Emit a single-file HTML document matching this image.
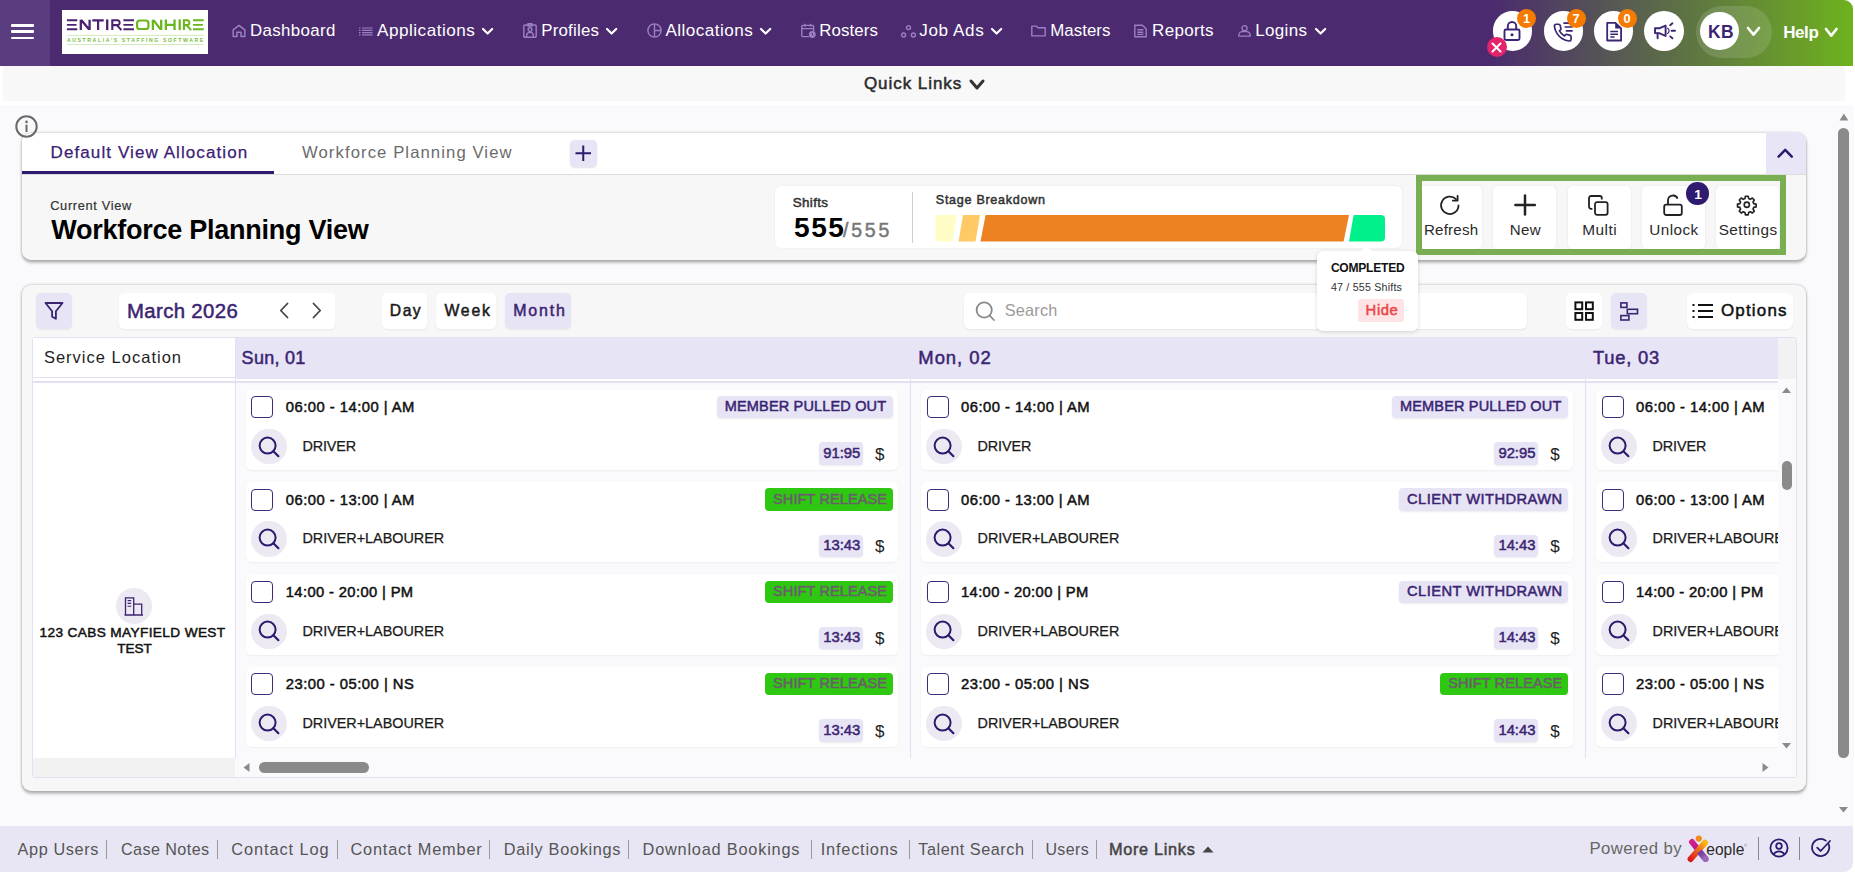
<!DOCTYPE html>
<html><head><meta charset="utf-8"><title>Allocations</title>
<style>
html,body{margin:0;padding:0}
body{width:1855px;height:872px;overflow:hidden;position:relative;background:#f9f9fb;font-family:"Liberation Sans",sans-serif}
.t{position:absolute;white-space:nowrap;line-height:1}
.r{position:absolute;box-sizing:border-box}
svg{position:absolute;overflow:visible}
.s text{font-family:"Liberation Sans",sans-serif}
</style></head><body>
<div class="r" style="left:0.00px;top:0.00px;width:1855.00px;height:872.00px;background:#fff"></div>
<div class="r" style="left:0.00px;top:105.30px;width:1853.80px;height:721.00px;background:#fafafc"></div>
<div class="r" style="left:0.00px;top:0.00px;width:1853.00px;height:66.00px;background:linear-gradient(90deg,#4b2a6f 0px,#4b2a6f 1490px,#6eb21e 1853px);border-top-right-radius:9px"></div>
<div class="r" style="left:0.00px;top:0.00px;width:50.00px;height:66.00px;background:#5a3d7f"></div>
<div class="r" style="left:10.50px;top:24.30px;width:23.50px;height:2.60px;background:#fff;border-radius:1px"></div>
<div class="r" style="left:10.50px;top:30.30px;width:23.50px;height:2.60px;background:#fff;border-radius:1px"></div>
<div class="r" style="left:10.50px;top:36.90px;width:23.50px;height:2.60px;background:#fff;border-radius:1px"></div>
<div class="r" style="left:62.00px;top:10.00px;width:146.00px;height:44.00px;background:#fff"></div>
<svg style="left:62px;top:10px" width="146" height="44" viewBox="0 0 146 44"><defs><clipPath id="lc"><rect x="0" y="9.4" width="146" height="10.7"/></clipPath></defs>
<g fill="none" stroke="#4a2270"><path d="M4.9 10.3H15.3M4.9 14.9H14.5M4.9 19.2H15.3" stroke-width="1.9"/><path d="M18.80 9.4V20.1M27.60 9.4V20.1M18.80 9.4L27.60 20.1" stroke-width="2.3" clip-path="url(#lc)"/><path d="M30.3 10.3H41.7M36.1 9.4V20.1" stroke-width="2.2"/><path d="M45.2 9.4V20.1" stroke-width="2.3"/><path d="M50.3 20.1V10.3H55.9A2.5 2.5 0 0 1 55.9 15.1H50.3M54.9 15.1L59.4 20.1" stroke-width="2.1"/><path d="M61.4 10.3H72.0M61.4 14.9H71.2M61.4 19.2H72.0" stroke-width="1.9"/></g>
<g fill="none" stroke="#6bb51e"><rect x="75.1" y="10.5" width="11.3" height="8.5" rx="2.6" stroke-width="2.2"/><path d="M90.90 9.4V20.1M99.20 9.4V20.1M90.90 9.4L99.20 20.1" stroke-width="2.3" clip-path="url(#lc)"/><path d="M103.85 9.4V20.1M112.55 9.4V20.1M103.8 14.8H112.6" stroke-width="2.3"/><path d="M117.7 9.4V20.1" stroke-width="2.3"/><path d="M121.9 20.1V10.3H125.6A2.5 2.5 0 0 1 125.6 15.1H121.9M124.6 15.1L129.1 20.1" stroke-width="2.1"/><path d="M131.0 10.3H141.7M131.0 14.9H140.9M131.0 19.2H141.7" stroke-width="1.9"/></g>
<rect x="4.9" y="24.9" width="136.8" height="0.9" fill="#cfe8b5"/>
<rect x="4.9" y="34.1" width="136.8" height="0.9" fill="#cfe8b5"/>
<text x="4.9" y="31.9" font-family="Liberation Sans" font-weight="bold" font-size="5.2" fill="#78bd38" textLength="136.4" lengthAdjust="spacing">AUSTRALIA'S   STAFFING   SOFTWARE</text>
</svg>
<svg class="s" style="left:250px;top:16px;" width="119.1" height="27.0"><text x="0.00" y="20.00" font-size="16.86" font-weight="normal" fill="#fff" textLength="85.38" lengthAdjust="spacing">Dashboard</text></svg>
<svg class="s" style="left:377px;top:16px;" width="132.0" height="27.4"><text x="0.00" y="20.00" font-size="17.12" font-weight="normal" fill="#fff" textLength="97.80" lengthAdjust="spacing">Applications</text></svg>
<svg class="s" style="left:541px;top:16px;" width="91.5" height="27.0"><text x="0.20" y="20.00" font-size="16.86" font-weight="normal" fill="#fff" textLength="57.78" lengthAdjust="spacing">Profiles</text></svg>
<svg class="s" style="left:665px;top:16px;" width="121.5" height="27.4"><text x="0.40" y="20.00" font-size="17.10" font-weight="normal" fill="#fff" textLength="87.30" lengthAdjust="spacing">Allocations</text></svg>
<svg class="s" style="left:819px;top:16px;" width="92.3" height="27.0"><text x="0.30" y="20.00" font-size="16.86" font-weight="normal" fill="#fff" textLength="58.58" lengthAdjust="spacing">Rosters</text></svg>
<svg class="s" style="left:919px;top:16px;" width="98.8" height="27.4"><text x="0.20" y="20.00" font-size="17.12" font-weight="normal" fill="#fff" textLength="64.60" lengthAdjust="spacing">Job Ads</text></svg>
<svg class="s" style="left:1050px;top:16px;" width="94.0" height="27.0"><text x="0.20" y="20.00" font-size="16.86" font-weight="normal" fill="#fff" textLength="60.28" lengthAdjust="spacing">Masters</text></svg>
<svg class="s" style="left:1152px;top:16px;" width="95.5" height="27.2"><text x="0.10" y="20.00" font-size="17.00" font-weight="normal" fill="#fff" textLength="61.49" lengthAdjust="spacing">Reports</text></svg>
<svg class="s" style="left:1255px;top:16px;" width="85.8" height="27.2"><text x="0.20" y="20.00" font-size="17.01" font-weight="normal" fill="#fff" textLength="51.79" lengthAdjust="spacing">Logins</text></svg>
<svg style="left:482.0px;top:27.5px" width="11.2" height="6.5"><path d="M1 1L5.60 5.50L10.20 1" fill="none" stroke="#fff" stroke-width="2.2" stroke-linecap="round" stroke-linejoin="round"/></svg>
<svg style="left:606.4px;top:27.5px" width="11.2" height="6.5"><path d="M1 1L5.60 5.50L10.20 1" fill="none" stroke="#fff" stroke-width="2.2" stroke-linecap="round" stroke-linejoin="round"/></svg>
<svg style="left:760.0px;top:27.5px" width="11.2" height="6.5"><path d="M1 1L5.60 5.50L10.20 1" fill="none" stroke="#fff" stroke-width="2.2" stroke-linecap="round" stroke-linejoin="round"/></svg>
<svg style="left:991.2px;top:27.5px" width="11.2" height="6.5"><path d="M1 1L5.60 5.50L10.20 1" fill="none" stroke="#fff" stroke-width="2.2" stroke-linecap="round" stroke-linejoin="round"/></svg>
<svg style="left:1314.8px;top:27.5px" width="11.2" height="6.5"><path d="M1 1L5.60 5.50L10.20 1" fill="none" stroke="#fff" stroke-width="2.2" stroke-linecap="round" stroke-linejoin="round"/></svg>
<svg style="left:232px;top:24px" width="14" height="14" viewBox="0 0 14 14"><path d="M1.2 12.5V5.8L7 1.3l5.8 4.5v6.7H9V8.2H5v4.3z" fill="none" stroke="#9b80c2" stroke-width="1.5" stroke-linejoin="round"/></svg>
<svg style="left:359px;top:26.5px" width="14" height="9" viewBox="0 0 14 9"><g stroke="#9b80c2" stroke-width="1.2"><path d="M0 1h1.5M0 3.3h1.5M0 5.6h1.5M0 7.9h1.5M3 1h10.5M3 3.3h10.5M3 5.6h10.5M3 7.9h10.5"/></g></svg>
<svg style="left:523px;top:23px" width="14" height="15" viewBox="0 0 14 15"><g fill="none" stroke="#9b80c2" stroke-width="1.4"><rect x="0.8" y="2" width="12.4" height="12.2" rx="1"/><circle cx="7" cy="6.6" r="1.9"/><path d="M3.6 14v-1.2a3.4 3.4 0 0 1 6.8 0V14"/><path d="M5 0.8h4v2.2H5z"/></g></svg>
<svg style="left:647px;top:23px" width="15" height="15" viewBox="0 0 15 15"><g fill="none" stroke="#9b80c2" stroke-width="1.4"><circle cx="7.5" cy="7.5" r="6.6"/><path d="M7.5 0.9v13.2M7.5 7.5h6.6"/></g></svg>
<svg style="left:801px;top:23px" width="15" height="15" viewBox="0 0 15 15"><g fill="none" stroke="#9b80c2" stroke-width="1.4"><path d="M8 13.6H1.6a0.8 0.8 0 0 1-0.8-0.8V3.2a0.8 0.8 0 0 1 0.8-0.8h10.2a0.8 0.8 0 0 1 0.8 0.8V8"/><path d="M0.8 5.6h11.8M4 0.8v3M9.5 0.8v3"/></g><circle cx="11.3" cy="11.5" r="3.4" fill="#9b80c2"/><path d="M11.3 9.8v1.8l1.1 0.8" stroke="#4b2a6f" stroke-width="0.9" fill="none"/></svg>
<svg style="left:901px;top:24.5px" width="15" height="13" viewBox="0 0 15 13"><g fill="none" stroke="#9b80c2" stroke-width="1.4"><circle cx="7.5" cy="2.6" r="2"/><circle cx="2.6" cy="10" r="2"/><circle cx="12.4" cy="10" r="2"/></g></svg>
<svg style="left:1031px;top:25px" width="15" height="12" viewBox="0 0 15 12"><path d="M0.8 10.9V1.1h4.6l1.4 1.6h7.4v8.2z" fill="none" stroke="#9b80c2" stroke-width="1.4" stroke-linejoin="round"/></svg>
<svg style="left:1134px;top:24px" width="13" height="14" viewBox="0 0 13 14"><g fill="none" stroke="#9b80c2" stroke-width="1.4"><path d="M0.8 12.8V1.2h7.6l3.8 3.8v7.8z"/><path d="M3.4 5.8h6M3.4 8.2h6M3.4 10.4h6"/></g></svg>
<svg style="left:1238px;top:25px" width="13" height="12" viewBox="0 0 13 12"><g fill="none" stroke="#9b80c2" stroke-width="1.3"><circle cx="6.5" cy="3.2" r="2.5"/><path d="M0.8 11.2v-1a3.5 3.5 0 0 1 3.5-3.5h4.4a3.5 3.5 0 0 1 3.5 3.5v1z"/></g></svg>
<div class="r" style="left:1492.75px;top:11.30px;width:39.50px;height:39.50px;background:#fff;border-radius:50%"></div>
<div class="r" style="left:1543.75px;top:11.30px;width:39.50px;height:39.50px;background:#fff;border-radius:50%"></div>
<div class="r" style="left:1593.95px;top:11.30px;width:39.50px;height:39.50px;background:#fff;border-radius:50%"></div>
<div class="r" style="left:1644.25px;top:11.30px;width:39.50px;height:39.50px;background:#fff;border-radius:50%"></div>
<svg style="left:1502px;top:20px" width="20" height="22" viewBox="0 0 20 22"><g fill="none" stroke="#3b2472" stroke-width="1.9"><rect x="2.5" y="9.5" width="15" height="10.5" rx="1.5"/><path d="M5.8 9.5V6.2a4.2 4.2 0 0 1 8.4 0v3.3"/></g><circle cx="10" cy="14.7" r="1.5" fill="#3b2472"/></svg>
<svg style="left:0;top:0" width="1" height="1"><g transform="translate(1552.6 22.6) scale(0.84)" fill="none" stroke="#3b2472" stroke-width="2" stroke-linejoin="round"><path d="M22 16.92v3a2 2 0 0 1-2.18 2 19.79 19.79 0 0 1-8.63-3.070 19.5 19.5 0 0 1-6-6 19.79 19.79 0 0 1-3.07-8.67A2 2 0 0 1 4.11 2h3a2 2 0 0 1 2 1.72 12.84 12.84 0 0 0 .7 2.81 2 2 0 0 1-.45 2.11L8.09 9.91a16 16 0 0 0 6 6l1.27-1.27a2 2 0 0 1 2.110-.45 12.84 12.84 0 0 0 2.81.7A2 2 0 0 1 22 16.92z"/></g><g stroke="#3b2472" stroke-width="1.7"><path d="M1563.4 23.2h9.3M1564.6 27h8.1M1565.8 30.8h6.9"/></g></svg>
<svg style="left:0;top:0" width="1" height="1"><path d="M1607.2 22.8H1615.4L1621.1 28.4V40.5H1607.2Z" fill="none" stroke="#3b2472" stroke-width="1.8" stroke-linejoin="round"/><path d="M1615.2 22.8L1621.1 28.6H1615.2Z" fill="#3b2472"/><g stroke="#3b2472" stroke-width="1.5"><path d="M1610.3 31.4H1618M1610.3 34.3H1618M1610.3 37.1H1614.6"/></g></svg>
<svg style="left:0;top:0" width="1" height="1"><path d="M1655 28.3H1659.2L1665.6 25.6V36L1659.2 33.1H1655Z" fill="none" stroke="#3b2472" stroke-width="1.9" stroke-linejoin="round"/><g stroke="#3b2472" stroke-width="1.9" stroke-linecap="round" fill="none"><path d="M1657.6 33.5V38.2M1670.2 25.2L1672.4 23.3M1671.6 30.8H1675M1670.2 36.4L1672.4 38.3"/><path d="M1667.6 28.2A3 3 0 0 1 1667.6 33.4" stroke-width="1.2"/></g></svg>
<div class="r" style="left:1516.80px;top:8.50px;width:19.40px;height:19.40px;background:#f57b00;border-radius:50%"></div>
<svg class="s" style="left:1522px;top:7px;" width="38.4" height="20.5"><text x="0.90" y="15.60" font-size="12.79" font-weight="bold" fill="#fff">1</text></svg>
<div class="r" style="left:1566.50px;top:8.50px;width:19.40px;height:19.40px;background:#f57b00;border-radius:50%"></div>
<svg class="s" style="left:1572px;top:7px;" width="38.4" height="20.5"><text x="0.60" y="15.60" font-size="12.79" font-weight="bold" fill="#fff">7</text></svg>
<div class="r" style="left:1617.50px;top:8.50px;width:19.40px;height:19.40px;background:#f57b00;border-radius:50%"></div>
<svg class="s" style="left:1623px;top:7px;" width="38.4" height="20.5"><text x="0.60" y="15.60" font-size="12.79" font-weight="bold" fill="#fff">0</text></svg>
<div class="r" style="left:1486.90px;top:37.20px;width:19.80px;height:19.80px;background:#e2246a;border-radius:50%"></div>
<svg style="left:1491.3px;top:41.6px" width="11" height="11"><path d="M1.5 1.5l8 8M9.5 1.5l-8 8" stroke="#fff" stroke-width="2" stroke-linecap="round"/></svg>
<div class="r" style="left:1696.00px;top:6.00px;width:76.00px;height:51.60px;background:rgba(255,255,255,0.13);border-radius:26px"></div>
<div class="r" style="left:1700.00px;top:11.60px;width:38.80px;height:38.80px;background:#fff;border-radius:50%"></div>
<svg class="s" style="left:1708px;top:17px;" width="60.4" height="27.9"><text x="0.00" y="21.00" font-size="17.44" font-weight="bold" fill="#3b2472" textLength="25.52" lengthAdjust="spacing">KB</text></svg>
<svg style="left:1746.7px;top:27.0px" width="13.0" height="8.6"><path d="M1 1L6.50 7.60L12.00 1" fill="none" stroke="#fff" stroke-width="2.6" stroke-linecap="round" stroke-linejoin="round"/></svg>
<svg class="s" style="left:1783px;top:18px;" width="69.6" height="27.2"><text x="0.20" y="20.00" font-size="17.01" font-weight="bold" fill="#fff" textLength="35.59" lengthAdjust="spacing">Help</text></svg>
<svg style="left:1824.6px;top:27.8px" width="12.5" height="8.6"><path d="M1 1L6.25 7.60L11.50 1" fill="none" stroke="#fff" stroke-width="2.6" stroke-linecap="round" stroke-linejoin="round"/></svg>
<div class="r" style="left:3.00px;top:66.00px;width:1842.00px;height:34.70px;background:#f8f8f8"></div>
<svg class="s" style="left:863px;top:69px;" width="131.5" height="27.2"><text x="0.90" y="19.60" font-size="17.03" font-weight="normal" fill="#2b2b2b" stroke="#2b2b2b" stroke-width="0.50" textLength="97.39" lengthAdjust="spacing">Quick Links</text></svg>
<svg style="left:970.3px;top:80.3px" width="14.0" height="9.0"><path d="M1 1L7.00 8.00L13.00 1" fill="none" stroke="#333" stroke-width="3.0" stroke-linecap="round" stroke-linejoin="round"/></svg>
<div class="r" style="left:22.40px;top:132.60px;width:1783.40px;height:127.60px;background:#f7f7f7;border-radius:9px;box-shadow:0 2.5px 3px rgba(0,0,0,0.24),0 0 3px rgba(0,0,0,0.26)"></div>
<div class="r" style="left:22.40px;top:132.60px;width:1783.40px;height:42.40px;background:#fff;border-radius:9px 9px 0 0;border-bottom:1px solid #dcdcdc"></div>
<div class="r" style="left:22.00px;top:171.00px;width:252.00px;height:3.00px;background:#2e1a6e"></div>
<svg class="s" style="left:50px;top:138px;" width="230.6" height="27.2"><text x="0.60" y="20.20" font-size="17.02" font-weight="normal" fill="#3a2175" stroke="#3a2175" stroke-width="0.25" textLength="196.59" lengthAdjust="spacing">Default View Allocation</text></svg>
<svg class="s" style="left:302px;top:138px;" width="242.9" height="26.7"><text x="0.00" y="20.00" font-size="16.68" font-weight="normal" fill="#6b6b6b" textLength="209.57" lengthAdjust="spacing">Workforce Planning View</text></svg>
<div class="r" style="left:570.00px;top:140.00px;width:27.00px;height:26.60px;background:#e6e4f5;border-radius:5px;box-shadow:0 1px 2px rgba(0,0,0,0.12)"></div>
<svg style="left:574.5px;top:145px" width="16.5" height="16.5"><path d="M8.25 0.5v15.5M0.5 8.25h15.5" stroke="#2e1a6e" stroke-width="2"/></svg>
<div class="r" style="left:1766.00px;top:132.00px;width:40.00px;height:42.00px;background:#e8e6f6;border-top-right-radius:9px"></div>
<svg style="left:1777px;top:148px" width="17" height="10"><path d="M1.6 8.6L8.2 1.8l6.6 6.8" fill="none" stroke="#2e1a6e" stroke-width="2.5" stroke-linecap="round" stroke-linejoin="round"/></svg>
<svg style="left:1777.3px;top:148.7px" width="0" height="0"></svg>
<svg class="s" style="left:50px;top:195px;" width="106.7" height="20.5"><text x="0.20" y="15.30" font-size="12.82" font-weight="normal" fill="#333" stroke="#333" stroke-width="0.20" textLength="81.10" lengthAdjust="spacing">Current View</text></svg>
<svg class="s" style="left:51px;top:207px;" width="371.5" height="43.3"><text x="0.30" y="31.60" font-size="27.03" font-weight="bold" fill="#000" textLength="317.39" lengthAdjust="spacing">Workforce Planning View</text></svg>
<svg style="left:15px;top:114.5px" width="23" height="23" viewBox="0 0 23 23"><circle cx="11.5" cy="11.5" r="10.2" fill="none" stroke="#6a6a6a" stroke-width="2"/><circle cx="11.5" cy="6.9" r="1.3" fill="#6a6a6a"/><rect x="10.5" y="9.6" width="2" height="7.4" fill="#6a6a6a"/></svg>
<div class="r" style="left:775.00px;top:186.00px;width:627.00px;height:62.00px;background:#fff;border-radius:6px;box-shadow:0 0 2px rgba(0,0,0,0.08)"></div>
<svg class="s" style="left:792px;top:191px;" width="61.9" height="21.4"><text x="0.80" y="16.20" font-size="13.40" font-weight="normal" fill="#333" stroke="#333" stroke-width="0.50" textLength="35.14" lengthAdjust="spacing">Shifts</text></svg>
<svg class="s" style="left:794px;top:204px;" width="106.2" height="45.0"><text x="0.00" y="33.30" font-size="28.10" font-weight="bold" fill="#000" textLength="49.97" lengthAdjust="spacing">555</text></svg>
<svg class="s" style="left:843px;top:214px;" width="85.4" height="31.2"><text x="0.00" y="23.30" font-size="19.50" font-weight="normal" fill="#777" stroke="#777" stroke-width="0.50" textLength="46.37" lengthAdjust="spacing">/555</text></svg>
<div class="r" style="left:912.00px;top:192.00px;width:1.00px;height:51.00px;background:#cfcfcf"></div>
<svg class="s" style="left:935px;top:189px;" width="134.1" height="20.1"><text x="0.80" y="15.00" font-size="12.53" font-weight="normal" fill="#333" stroke="#333" stroke-width="0.50" textLength="109.08" lengthAdjust="spacing">Stage Breakdown</text></svg>
<svg style="left:0;top:0" width="1855" height="300">
<path d="M937.5 215H956.8L952.4 241.4H937.5A2 2 0 0 1 935.5 239.4V217A2 2 0 0 1 937.5 215z" fill="#fffcc6"/>
<path d="M963 215H980L975.5 241.4H958.5z" fill="#ffca66"/>
<path d="M985.6 215H1349L1343.6 241.4H980.5z" fill="#ec8221"/>
<path d="M1353.6 215H1381A4 4 0 0 1 1385 219V237.4A4 4 0 0 1 1381 241.4H1349z" fill="#00f08c"/>
</svg>
<div class="r" style="left:1416.00px;top:175.00px;width:370.00px;height:80.00px;border:6px solid #7aae52"></div>
<div class="r" style="left:1419.00px;top:186.00px;width:63.20px;height:62.60px;background:#fff;border-radius:5px;box-shadow:0 0 3px rgba(0,0,0,0.07)"></div>
<svg class="s" style="left:1424px;top:217px;" width="84.3" height="24.2"><text x="0.00" y="18.10" font-size="15.12" font-weight="normal" fill="#2a2a2a" textLength="54.06" lengthAdjust="spacing">Refresh</text></svg>
<div class="r" style="left:1493.00px;top:186.00px;width:63.20px;height:62.60px;background:#fff;border-radius:5px;box-shadow:0 0 3px rgba(0,0,0,0.07)"></div>
<svg class="s" style="left:1509px;top:217px;" width="61.0" height="24.2"><text x="0.80" y="18.10" font-size="15.12" font-weight="normal" fill="#2a2a2a" textLength="30.76" lengthAdjust="spacing">New</text></svg>
<div class="r" style="left:1568.00px;top:186.00px;width:63.20px;height:62.60px;background:#fff;border-radius:5px;box-shadow:0 0 3px rgba(0,0,0,0.07)"></div>
<svg class="s" style="left:1582px;top:217px;" width="65.3" height="24.6"><text x="0.20" y="18.10" font-size="15.38" font-weight="normal" fill="#2a2a2a" textLength="34.58" lengthAdjust="spacing">Multi</text></svg>
<div class="r" style="left:1642.00px;top:186.00px;width:63.20px;height:62.60px;background:#fff;border-radius:5px;box-shadow:0 0 3px rgba(0,0,0,0.07)"></div>
<svg class="s" style="left:1649px;top:217px;" width="79.3" height="24.5"><text x="0.30" y="18.10" font-size="15.29" font-weight="normal" fill="#2a2a2a" textLength="48.77" lengthAdjust="spacing">Unlock</text></svg>
<div class="r" style="left:1716.00px;top:186.00px;width:63.20px;height:62.60px;background:#fff;border-radius:5px;box-shadow:0 0 3px rgba(0,0,0,0.07)"></div>
<svg class="s" style="left:1718px;top:217px;" width="89.0" height="24.5"><text x="0.70" y="18.10" font-size="15.33" font-weight="normal" fill="#2a2a2a" textLength="58.37" lengthAdjust="spacing">Settings</text></svg>
<div class="r" style="left:1422.00px;top:175.00px;width:364.00px;height:6.00px;background:#7aae52"></div>
<div class="r" style="left:1416.00px;top:175.00px;width:6.00px;height:80.00px;background:#7aae52"></div>
<svg style="left:1439px;top:195px" width="23" height="21" viewBox="0 0 23 21"><g fill="none" stroke="#222" stroke-width="1.8" stroke-linecap="round" stroke-linejoin="round"><path d="M19.5 10.5A8.7 8.7 0 1 1 17 4.2"/><path d="M18.6 0.8v4.8h-4.8"/></g></svg>
<svg style="left:1514px;top:194px" width="22" height="22"><path d="M11 1.6v19M1.4 11h19.4" stroke="#222" stroke-width="2.5" stroke-linecap="round"/></svg>
<svg style="left:1588px;top:194.5px" width="22" height="21" viewBox="0 0 22 21"><g fill="none" stroke="#222" stroke-width="1.8" stroke-linejoin="round"><rect x="7" y="7.2" width="12.6" height="12.6" rx="2"/><path d="M4.4 13.8H3A2 2 0 0 1 1 11.8V3A2 2 0 0 1 3 1h8.8a2 2 0 0 1 2 2v1.4"/></g></svg>
<svg style="left:1663px;top:194.5px" width="20" height="21" viewBox="0 0 20 21"><g fill="none" stroke="#222" stroke-width="1.8" stroke-linejoin="round"><rect x="1.2" y="9.6" width="17.6" height="10.4" rx="2"/><path d="M5 9.6V5.6a5 5 0 0 1 9.6-2"/></g></svg>
<svg style="left:1737.2px;top:195.2px" width="19.6" height="19.6" viewBox="0 0 24 24"><g fill="none" stroke="#222" stroke-width="2" stroke-linejoin="round"><circle cx="12" cy="12" r="3.2"/><path d="M10.3 1.5h3.4l0.6 2.9 2 0.9 2.5-1.6 2.4 2.4-1.6 2.5 0.9 2 2.9 0.6v3.4l-2.9 0.6-0.9 2 1.6 2.5-2.4 2.4-2.5-1.6-2 0.9-0.6 2.9h-3.4l-0.6-2.9-2-0.9-2.5 1.6-2.4-2.4 1.6-2.5-0.9-2-2.9-0.6v-3.4l2.9-0.6 0.9-2-1.6-2.5 2.4-2.4 2.5 1.6 2-0.9z"/></g></svg>
<div class="r" style="left:1686.40px;top:182.40px;width:22.60px;height:22.60px;background:#2e1a6e;border-radius:50%"></div>
<svg class="s" style="left:1694px;top:182px;" width="41.0" height="21.9"><text x="0.20" y="16.60" font-size="13.66" font-weight="bold" fill="#fff">1</text></svg>
<div class="r" style="left:22.40px;top:284.80px;width:1783.40px;height:506.00px;background:#f7f7f7;border-radius:9px;box-shadow:0 2.5px 3px rgba(0,0,0,0.24),0 0 3px rgba(0,0,0,0.26)"></div>
<div class="r" style="left:36.00px;top:293.00px;width:36.00px;height:36.00px;background:#e6e4f5;border-radius:5px;box-shadow:0 1px 2px rgba(0,0,0,0.06)"></div>
<svg style="left:44px;top:301px" width="20" height="20" viewBox="0 0 20 20"><path d="M1.5 2h17l-6.6 8.2v7.6l-3.8-2.2v-5.4z" fill="none" stroke="#3b2472" stroke-width="1.8" stroke-linejoin="round"/></svg>
<div class="r" style="left:119.00px;top:293.00px;width:216.00px;height:36.00px;background:#fff;border-radius:5px;box-shadow:0 1px 2px rgba(0,0,0,0.06)"></div>
<svg class="s" style="left:127px;top:294px;" width="151.4" height="32.6"><text x="0.00" y="23.80" font-size="20.35" font-weight="normal" fill="#3b2472" stroke="#3b2472" stroke-width="0.50" textLength="110.72" lengthAdjust="spacing">March 2026</text></svg>
<svg style="left:279px;top:302px" width="10" height="17"><path d="M8.5 1.5L1.8 8.5l6.7 7" fill="none" stroke="#444" stroke-width="1.8" stroke-linecap="round" stroke-linejoin="round"/></svg>
<svg style="left:312px;top:302px" width="10" height="17"><path d="M1.5 1.5l6.7 7-6.7 7" fill="none" stroke="#444" stroke-width="1.8" stroke-linecap="round" stroke-linejoin="round"/></svg>
<div class="r" style="left:382.20px;top:293.20px;width:44.60px;height:35.50px;background:#fff;border-radius:5px;box-shadow:0 1px 2px rgba(0,0,0,0.06)"></div>
<div class="r" style="left:436.10px;top:293.20px;width:59.80px;height:35.50px;background:#fff;border-radius:5px;box-shadow:0 1px 2px rgba(0,0,0,0.06)"></div>
<div class="r" style="left:505.20px;top:293.20px;width:65.70px;height:35.50px;background:#e6e4f5;border-radius:5px;box-shadow:0 1px 2px rgba(0,0,0,0.06)"></div>
<svg class="s" style="left:389px;top:297px;" width="62.3" height="25.1"><text x="0.80" y="18.50" font-size="15.70" font-weight="normal" fill="#1a1a1a" stroke="#1a1a1a" stroke-width="0.50" textLength="30.90" lengthAdjust="spacing">Day</text></svg>
<svg class="s" style="left:444px;top:297px;" width="77.1" height="25.3"><text x="0.40" y="18.50" font-size="15.81" font-weight="normal" fill="#1a1a1a" stroke="#1a1a1a" stroke-width="0.50" textLength="45.51" lengthAdjust="spacing">Week</text></svg>
<svg class="s" style="left:513px;top:297px;" width="83.5" height="25.5"><text x="0.20" y="18.50" font-size="15.94" font-weight="normal" fill="#3b2472" stroke="#3b2472" stroke-width="0.50" textLength="51.62" lengthAdjust="spacing">Month</text></svg>
<div class="r" style="left:964.00px;top:293.00px;width:563.00px;height:36.00px;background:#fff;border-radius:6px;box-shadow:0 1px 2px rgba(0,0,0,0.08)"></div>
<svg style="left:975px;top:301px" width="21" height="21"><circle cx="9.2" cy="9" r="7.6" fill="none" stroke="#8a8a8a" stroke-width="1.8"/><path d="M14.6 14.5l4.3 4.5" stroke="#8a8a8a" stroke-width="1.8" stroke-linecap="round"/></svg>
<svg class="s" style="left:1004px;top:297px;" width="85.2" height="26.0"><text x="0.70" y="19.00" font-size="16.28" font-weight="normal" fill="#9a9a9a" textLength="52.64" lengthAdjust="spacing">Search</text></svg>
<div class="r" style="left:1566.00px;top:293.00px;width:36.00px;height:36.00px;background:#fff;border-radius:5px;box-shadow:0 1px 2px rgba(0,0,0,0.06)"></div>
<svg style="left:1574px;top:301px" width="20" height="20"><g fill="none" stroke="#111" stroke-width="2"><rect x="1.4" y="1.4" width="6.8" height="6.8"/><rect x="12" y="1.4" width="6.8" height="6.8"/><rect x="1.4" y="12" width="6.8" height="6.8"/><rect x="12" y="12" width="6.8" height="6.8"/></g></svg>
<div class="r" style="left:1611.00px;top:293.00px;width:36.00px;height:36.00px;background:#e6e4f5;border-radius:5px;box-shadow:0 1px 2px rgba(0,0,0,0.06)"></div>
<svg style="left:1620px;top:302px" width="19" height="19"><g fill="none" stroke="#3b2472" stroke-width="1.6"><rect x="0.9" y="0.9" width="6" height="4.5"/><rect x="7.3" y="7.3" width="10.2" height="4.4"/><rect x="0.9" y="13.6" width="8" height="4.4"/></g></svg>
<div class="r" style="left:1687.00px;top:293.00px;width:106.00px;height:36.00px;background:#fff;border-radius:6px;box-shadow:0 1px 2px rgba(0,0,0,0.06)"></div>
<svg style="left:1692px;top:303px" width="22" height="16"><g stroke="#111" stroke-width="2"><path d="M6 2h15M6 8h15M6 14h15"/></g><g fill="#111"><rect x="0.5" y="1" width="2" height="2"/><rect x="0.5" y="7" width="2" height="2"/><rect x="0.5" y="13" width="2" height="2"/></g></svg>
<svg class="s" style="left:1721px;top:296px;" width="99.4" height="27.1"><text x="0.00" y="20.30" font-size="16.95" font-weight="normal" fill="#111" stroke="#111" stroke-width="0.50" textLength="65.49" lengthAdjust="spacing">Options</text></svg>
<div class="r" style="left:32.00px;top:337.00px;width:1765.00px;height:440.50px;background:#fafafc;border:1px solid #e2e0f3;border-radius:3px"></div>
<div class="r" style="left:33.00px;top:338.00px;width:202.00px;height:40.60px;background:#fff"></div>
<div class="r" style="left:235.00px;top:338.00px;width:1543.00px;height:40.60px;background:#e6e4f5"></div>
<div class="r" style="left:1778.00px;top:338.00px;width:18.00px;height:40.60px;background:#f2f2f4"></div>
<div class="r" style="left:33.00px;top:378.60px;width:1745.00px;height:2.00px;background:#fff"></div>
<div class="r" style="left:33.00px;top:380.60px;width:1745.00px;height:2.00px;background:#e2e0f5"></div>
<svg class="s" style="left:43px;top:343px;" width="170.2" height="26.4"><text x="0.90" y="19.80" font-size="16.51" font-weight="normal" fill="#1e1e1e" textLength="137.16" lengthAdjust="spacing">Service Location</text></svg>
<div class="r" style="left:33.00px;top:377.00px;width:202.00px;height:1.30px;background:#e2e0f5"></div>
<svg class="s" style="left:241px;top:343px;" width="99.7" height="28.8"><text x="0.60" y="21.20" font-size="18.02" font-weight="normal" fill="#3b2472" stroke="#3b2472" stroke-width="0.50" textLength="63.66" lengthAdjust="spacing">Sun, 01</text></svg>
<svg class="s" style="left:918px;top:342px;" width="109.4" height="29.5"><text x="0.30" y="22.00" font-size="18.44" font-weight="normal" fill="#3b2472" stroke="#3b2472" stroke-width="0.50" textLength="72.49" lengthAdjust="spacing">Mon, 02</text></svg>
<svg class="s" style="left:1593px;top:342px;" width="103.0" height="29.4"><text x="0.00" y="21.80" font-size="18.38" font-weight="normal" fill="#3b2472" stroke="#3b2472" stroke-width="0.50" textLength="66.29" lengthAdjust="spacing">Tue, 03</text></svg>
<div class="r" style="left:33.00px;top:382.60px;width:202.00px;height:375.00px;background:#fff"></div>
<div class="r" style="left:235.00px;top:338.00px;width:1.00px;height:420.00px;background:#e2e0f5"></div>
<div class="r" style="left:910.00px;top:378.60px;width:1.00px;height:379.00px;background:#e2e0f5"></div>
<div class="r" style="left:1585.00px;top:378.60px;width:1.00px;height:379.00px;background:#e2e0f5"></div>
<div class="r" style="left:33.00px;top:757.60px;width:202.00px;height:19.40px;background:#f2f2f2"></div>
<div style="position:absolute;left:0;top:0;width:1855px;height:872px;clip-path:inset(382.6px 77px 114.4px 236px)">
<div class="r" style="left:245.80px;top:390.00px;width:652.00px;height:80.00px;background:#fff;border-radius:6px;box-shadow:0 1px 2px rgba(0,0,0,0.05)"></div>
<div class="r" style="left:251.30px;top:396.30px;width:22.20px;height:22.20px;border:1.6px solid #3d2a7a;border-radius:4px;background:#fff"></div>
<svg class="s" style="left:285px;top:395px;" width="158.2" height="23.7"><text x="0.80" y="17.40" font-size="14.79" font-weight="normal" fill="#111" stroke="#111" stroke-width="0.50" textLength="128.64" lengthAdjust="spacing">06:00 - 14:00 | AM</text></svg>
<div class="r" style="left:251.05px;top:428.75px;width:35.50px;height:35.50px;background:#ece9f3;border-radius:50%"></div>
<svg style="left:258.2px;top:435.5px" width="24" height="24"><circle cx="9.6" cy="9.6" r="8" fill="none" stroke="#2e1a6e" stroke-width="2"/><path d="M15.4 15.2l5 5" stroke="#2e1a6e" stroke-width="2.2" stroke-linecap="round"/></svg>
<svg class="s" style="left:302px;top:434px;" width="82.5" height="23.0"><text x="0.40" y="17.00" font-size="14.39" font-weight="normal" fill="#1a1a1a" stroke="#1a1a1a" stroke-width="0.25" textLength="53.71" lengthAdjust="spacing">DRIVER</text></svg>
<div class="r" style="left:716.80px;top:395.80px;width:176.00px;height:22.60px;background:#e6e4f5;border-radius:4px;box-shadow:0 1px 2px rgba(0,0,0,0.08)"></div>
<svg class="s" style="left:724px;top:394px;" width="190.4" height="23.3"><text x="0.80" y="17.20" font-size="14.53" font-weight="normal" fill="#3b2472" stroke="#3b2472" stroke-width="0.50" textLength="161.32" lengthAdjust="spacing">MEMBER PULLED OUT</text></svg>
<div class="r" style="left:819.20px;top:442.30px;width:43.60px;height:22.30px;background:#e6e4f5;border-radius:4px;box-shadow:0 1px 2px rgba(0,0,0,0.08)"></div>
<svg class="s" style="left:823px;top:440px;" width="66.7" height="23.7"><text x="0.20" y="17.50" font-size="14.83" font-weight="normal" fill="#3b2472" stroke="#3b2472" stroke-width="0.50" textLength="37.04" lengthAdjust="spacing">91:95</text></svg>
<svg class="s" style="left:875px;top:440px;" width="51.0" height="27.2"><text x="0.00" y="19.60" font-size="17.00" font-weight="normal" fill="#222">$</text></svg>
<div class="r" style="left:921.00px;top:390.00px;width:652.00px;height:80.00px;background:#fff;border-radius:6px;box-shadow:0 1px 2px rgba(0,0,0,0.05)"></div>
<div class="r" style="left:926.50px;top:396.30px;width:22.20px;height:22.20px;border:1.6px solid #3d2a7a;border-radius:4px;background:#fff"></div>
<svg class="s" style="left:961px;top:395px;" width="158.2" height="23.7"><text x="0.00" y="17.40" font-size="14.79" font-weight="normal" fill="#111" stroke="#111" stroke-width="0.50" textLength="128.64" lengthAdjust="spacing">06:00 - 14:00 | AM</text></svg>
<div class="r" style="left:926.25px;top:428.75px;width:35.50px;height:35.50px;background:#ece9f3;border-radius:50%"></div>
<svg style="left:933.4px;top:435.5px" width="24" height="24"><circle cx="9.6" cy="9.6" r="8" fill="none" stroke="#2e1a6e" stroke-width="2"/><path d="M15.4 15.2l5 5" stroke="#2e1a6e" stroke-width="2.2" stroke-linecap="round"/></svg>
<svg class="s" style="left:977px;top:434px;" width="82.5" height="23.0"><text x="0.60" y="17.00" font-size="14.39" font-weight="normal" fill="#1a1a1a" stroke="#1a1a1a" stroke-width="0.25" textLength="53.71" lengthAdjust="spacing">DRIVER</text></svg>
<div class="r" style="left:1392.00px;top:395.80px;width:176.00px;height:22.60px;background:#e6e4f5;border-radius:4px;box-shadow:0 1px 2px rgba(0,0,0,0.08)"></div>
<svg class="s" style="left:1400px;top:394px;" width="190.4" height="23.3"><text x="0.00" y="17.20" font-size="14.53" font-weight="normal" fill="#3b2472" stroke="#3b2472" stroke-width="0.50" textLength="161.32" lengthAdjust="spacing">MEMBER PULLED OUT</text></svg>
<div class="r" style="left:1494.40px;top:442.30px;width:43.60px;height:22.30px;background:#e6e4f5;border-radius:4px;box-shadow:0 1px 2px rgba(0,0,0,0.08)"></div>
<svg class="s" style="left:1498px;top:440px;" width="66.7" height="23.7"><text x="0.40" y="17.50" font-size="14.83" font-weight="normal" fill="#3b2472" stroke="#3b2472" stroke-width="0.50" textLength="37.04" lengthAdjust="spacing">92:95</text></svg>
<svg class="s" style="left:1550px;top:440px;" width="51.0" height="27.2"><text x="0.20" y="19.60" font-size="17.00" font-weight="normal" fill="#222">$</text></svg>
<div class="r" style="left:1596.00px;top:390.00px;width:652.00px;height:80.00px;background:#fff;border-radius:6px;box-shadow:0 1px 2px rgba(0,0,0,0.05)"></div>
<div class="r" style="left:1601.50px;top:396.30px;width:22.20px;height:22.20px;border:1.6px solid #3d2a7a;border-radius:4px;background:#fff"></div>
<svg class="s" style="left:1636px;top:395px;" width="158.2" height="23.7"><text x="0.00" y="17.40" font-size="14.79" font-weight="normal" fill="#111" stroke="#111" stroke-width="0.50" textLength="128.64" lengthAdjust="spacing">06:00 - 14:00 | AM</text></svg>
<div class="r" style="left:1601.25px;top:428.75px;width:35.50px;height:35.50px;background:#ece9f3;border-radius:50%"></div>
<svg style="left:1608.4px;top:435.5px" width="24" height="24"><circle cx="9.6" cy="9.6" r="8" fill="none" stroke="#2e1a6e" stroke-width="2"/><path d="M15.4 15.2l5 5" stroke="#2e1a6e" stroke-width="2.2" stroke-linecap="round"/></svg>
<svg class="s" style="left:1652px;top:434px;" width="82.5" height="23.0"><text x="0.60" y="17.00" font-size="14.39" font-weight="normal" fill="#1a1a1a" stroke="#1a1a1a" stroke-width="0.25" textLength="53.71" lengthAdjust="spacing">DRIVER</text></svg>
<div class="r" style="left:245.80px;top:482.40px;width:652.00px;height:80.00px;background:#fff;border-radius:6px;box-shadow:0 1px 2px rgba(0,0,0,0.05)"></div>
<div class="r" style="left:251.30px;top:488.70px;width:22.20px;height:22.20px;border:1.6px solid #3d2a7a;border-radius:4px;background:#fff"></div>
<svg class="s" style="left:285px;top:487px;" width="158.1" height="23.7"><text x="0.80" y="17.80" font-size="14.79" font-weight="normal" fill="#111" stroke="#111" stroke-width="0.50" textLength="128.54" lengthAdjust="spacing">06:00 - 13:00 | AM</text></svg>
<div class="r" style="left:251.05px;top:521.15px;width:35.50px;height:35.50px;background:#ece9f3;border-radius:50%"></div>
<svg style="left:258.2px;top:527.9px" width="24" height="24"><circle cx="9.6" cy="9.6" r="8" fill="none" stroke="#2e1a6e" stroke-width="2"/><path d="M15.4 15.2l5 5" stroke="#2e1a6e" stroke-width="2.2" stroke-linecap="round"/></svg>
<svg class="s" style="left:302px;top:526px;" width="170.5" height="23.0"><text x="0.40" y="17.40" font-size="14.39" font-weight="normal" fill="#1a1a1a" stroke="#1a1a1a" stroke-width="0.25" textLength="141.71" lengthAdjust="spacing">DRIVER+LABOURER</text></svg>
<div class="r" style="left:765.00px;top:488.20px;width:127.80px;height:22.60px;background:#2ec712;border-radius:4px"></div>
<svg class="s" style="left:773px;top:486px;" width="143.1" height="23.3"><text x="0.00" y="17.60" font-size="14.53" font-weight="normal" fill="#6b5e6b" stroke="#6b5e6b" stroke-width="0.50" textLength="114.02" lengthAdjust="spacing">SHIFT RELEASE</text></svg>
<div class="r" style="left:819.20px;top:534.70px;width:43.60px;height:22.30px;background:#e6e4f5;border-radius:4px;box-shadow:0 1px 2px rgba(0,0,0,0.08)"></div>
<svg class="s" style="left:823px;top:532px;" width="66.7" height="23.7"><text x="0.20" y="17.90" font-size="14.83" font-weight="normal" fill="#3b2472" stroke="#3b2472" stroke-width="0.50" textLength="37.04" lengthAdjust="spacing">13:43</text></svg>
<svg class="s" style="left:875px;top:532px;" width="51.0" height="27.2"><text x="0.00" y="20.00" font-size="17.00" font-weight="normal" fill="#222">$</text></svg>
<div class="r" style="left:921.00px;top:482.40px;width:652.00px;height:80.00px;background:#fff;border-radius:6px;box-shadow:0 1px 2px rgba(0,0,0,0.05)"></div>
<div class="r" style="left:926.50px;top:488.70px;width:22.20px;height:22.20px;border:1.6px solid #3d2a7a;border-radius:4px;background:#fff"></div>
<svg class="s" style="left:961px;top:487px;" width="158.1" height="23.7"><text x="0.00" y="17.80" font-size="14.79" font-weight="normal" fill="#111" stroke="#111" stroke-width="0.50" textLength="128.54" lengthAdjust="spacing">06:00 - 13:00 | AM</text></svg>
<div class="r" style="left:926.25px;top:521.15px;width:35.50px;height:35.50px;background:#ece9f3;border-radius:50%"></div>
<svg style="left:933.4px;top:527.9px" width="24" height="24"><circle cx="9.6" cy="9.6" r="8" fill="none" stroke="#2e1a6e" stroke-width="2"/><path d="M15.4 15.2l5 5" stroke="#2e1a6e" stroke-width="2.2" stroke-linecap="round"/></svg>
<svg class="s" style="left:977px;top:526px;" width="170.5" height="23.0"><text x="0.60" y="17.40" font-size="14.39" font-weight="normal" fill="#1a1a1a" stroke="#1a1a1a" stroke-width="0.25" textLength="141.71" lengthAdjust="spacing">DRIVER+LABOURER</text></svg>
<div class="r" style="left:1399.00px;top:488.20px;width:169.00px;height:22.60px;background:#e6e4f5;border-radius:4px;box-shadow:0 1px 2px rgba(0,0,0,0.08)"></div>
<svg class="s" style="left:1407px;top:486px;" width="184.6" height="23.5"><text x="0.00" y="17.60" font-size="14.70" font-weight="normal" fill="#3b2472" stroke="#3b2472" stroke-width="0.50" textLength="155.23" lengthAdjust="spacing">CLIENT WITHDRAWN</text></svg>
<div class="r" style="left:1494.40px;top:534.70px;width:43.60px;height:22.30px;background:#e6e4f5;border-radius:4px;box-shadow:0 1px 2px rgba(0,0,0,0.08)"></div>
<svg class="s" style="left:1498px;top:532px;" width="66.7" height="23.7"><text x="0.40" y="17.90" font-size="14.83" font-weight="normal" fill="#3b2472" stroke="#3b2472" stroke-width="0.50" textLength="37.04" lengthAdjust="spacing">14:43</text></svg>
<svg class="s" style="left:1550px;top:532px;" width="51.0" height="27.2"><text x="0.20" y="20.00" font-size="17.00" font-weight="normal" fill="#222">$</text></svg>
<div class="r" style="left:1596.00px;top:482.40px;width:652.00px;height:80.00px;background:#fff;border-radius:6px;box-shadow:0 1px 2px rgba(0,0,0,0.05)"></div>
<div class="r" style="left:1601.50px;top:488.70px;width:22.20px;height:22.20px;border:1.6px solid #3d2a7a;border-radius:4px;background:#fff"></div>
<svg class="s" style="left:1636px;top:487px;" width="158.1" height="23.7"><text x="0.00" y="17.80" font-size="14.79" font-weight="normal" fill="#111" stroke="#111" stroke-width="0.50" textLength="128.54" lengthAdjust="spacing">06:00 - 13:00 | AM</text></svg>
<div class="r" style="left:1601.25px;top:521.15px;width:35.50px;height:35.50px;background:#ece9f3;border-radius:50%"></div>
<svg style="left:1608.4px;top:527.9px" width="24" height="24"><circle cx="9.6" cy="9.6" r="8" fill="none" stroke="#2e1a6e" stroke-width="2"/><path d="M15.4 15.2l5 5" stroke="#2e1a6e" stroke-width="2.2" stroke-linecap="round"/></svg>
<svg class="s" style="left:1652px;top:526px;" width="170.5" height="23.0"><text x="0.60" y="17.40" font-size="14.39" font-weight="normal" fill="#1a1a1a" stroke="#1a1a1a" stroke-width="0.25" textLength="141.71" lengthAdjust="spacing">DRIVER+LABOURER</text></svg>
<div class="r" style="left:245.80px;top:574.80px;width:652.00px;height:80.00px;background:#fff;border-radius:6px;box-shadow:0 1px 2px rgba(0,0,0,0.05)"></div>
<div class="r" style="left:251.30px;top:581.10px;width:22.20px;height:22.20px;border:1.6px solid #3d2a7a;border-radius:4px;background:#fff"></div>
<svg class="s" style="left:285px;top:580px;" width="156.8" height="23.6"><text x="0.80" y="17.20" font-size="14.74" font-weight="normal" fill="#111" stroke="#111" stroke-width="0.50" textLength="127.33" lengthAdjust="spacing">14:00 - 20:00 | PM</text></svg>
<div class="r" style="left:251.05px;top:613.55px;width:35.50px;height:35.50px;background:#ece9f3;border-radius:50%"></div>
<svg style="left:258.2px;top:620.3px" width="24" height="24"><circle cx="9.6" cy="9.6" r="8" fill="none" stroke="#2e1a6e" stroke-width="2"/><path d="M15.4 15.2l5 5" stroke="#2e1a6e" stroke-width="2.2" stroke-linecap="round"/></svg>
<svg class="s" style="left:302px;top:619px;" width="170.5" height="23.0"><text x="0.40" y="16.80" font-size="14.39" font-weight="normal" fill="#1a1a1a" stroke="#1a1a1a" stroke-width="0.25" textLength="141.71" lengthAdjust="spacing">DRIVER+LABOURER</text></svg>
<div class="r" style="left:765.00px;top:580.60px;width:127.80px;height:22.60px;background:#2ec712;border-radius:4px"></div>
<svg class="s" style="left:773px;top:579px;" width="143.1" height="23.3"><text x="0.00" y="17.00" font-size="14.53" font-weight="normal" fill="#6b5e6b" stroke="#6b5e6b" stroke-width="0.50" textLength="114.02" lengthAdjust="spacing">SHIFT RELEASE</text></svg>
<div class="r" style="left:819.20px;top:627.10px;width:43.60px;height:22.30px;background:#e6e4f5;border-radius:4px;box-shadow:0 1px 2px rgba(0,0,0,0.08)"></div>
<svg class="s" style="left:823px;top:625px;" width="66.7" height="23.7"><text x="0.20" y="17.30" font-size="14.83" font-weight="normal" fill="#3b2472" stroke="#3b2472" stroke-width="0.50" textLength="37.04" lengthAdjust="spacing">13:43</text></svg>
<svg class="s" style="left:875px;top:624px;" width="51.0" height="27.2"><text x="0.00" y="20.40" font-size="17.00" font-weight="normal" fill="#222">$</text></svg>
<div class="r" style="left:921.00px;top:574.80px;width:652.00px;height:80.00px;background:#fff;border-radius:6px;box-shadow:0 1px 2px rgba(0,0,0,0.05)"></div>
<div class="r" style="left:926.50px;top:581.10px;width:22.20px;height:22.20px;border:1.6px solid #3d2a7a;border-radius:4px;background:#fff"></div>
<svg class="s" style="left:961px;top:580px;" width="156.8" height="23.6"><text x="0.00" y="17.20" font-size="14.74" font-weight="normal" fill="#111" stroke="#111" stroke-width="0.50" textLength="127.33" lengthAdjust="spacing">14:00 - 20:00 | PM</text></svg>
<div class="r" style="left:926.25px;top:613.55px;width:35.50px;height:35.50px;background:#ece9f3;border-radius:50%"></div>
<svg style="left:933.4px;top:620.3px" width="24" height="24"><circle cx="9.6" cy="9.6" r="8" fill="none" stroke="#2e1a6e" stroke-width="2"/><path d="M15.4 15.2l5 5" stroke="#2e1a6e" stroke-width="2.2" stroke-linecap="round"/></svg>
<svg class="s" style="left:977px;top:619px;" width="170.5" height="23.0"><text x="0.60" y="16.80" font-size="14.39" font-weight="normal" fill="#1a1a1a" stroke="#1a1a1a" stroke-width="0.25" textLength="141.71" lengthAdjust="spacing">DRIVER+LABOURER</text></svg>
<div class="r" style="left:1399.00px;top:580.60px;width:169.00px;height:22.60px;background:#e6e4f5;border-radius:4px;box-shadow:0 1px 2px rgba(0,0,0,0.08)"></div>
<svg class="s" style="left:1407px;top:579px;" width="184.6" height="23.5"><text x="0.00" y="17.00" font-size="14.70" font-weight="normal" fill="#3b2472" stroke="#3b2472" stroke-width="0.50" textLength="155.23" lengthAdjust="spacing">CLIENT WITHDRAWN</text></svg>
<div class="r" style="left:1494.40px;top:627.10px;width:43.60px;height:22.30px;background:#e6e4f5;border-radius:4px;box-shadow:0 1px 2px rgba(0,0,0,0.08)"></div>
<svg class="s" style="left:1498px;top:625px;" width="66.7" height="23.7"><text x="0.40" y="17.30" font-size="14.83" font-weight="normal" fill="#3b2472" stroke="#3b2472" stroke-width="0.50" textLength="37.04" lengthAdjust="spacing">14:43</text></svg>
<svg class="s" style="left:1550px;top:624px;" width="51.0" height="27.2"><text x="0.20" y="20.40" font-size="17.00" font-weight="normal" fill="#222">$</text></svg>
<div class="r" style="left:1596.00px;top:574.80px;width:652.00px;height:80.00px;background:#fff;border-radius:6px;box-shadow:0 1px 2px rgba(0,0,0,0.05)"></div>
<div class="r" style="left:1601.50px;top:581.10px;width:22.20px;height:22.20px;border:1.6px solid #3d2a7a;border-radius:4px;background:#fff"></div>
<svg class="s" style="left:1636px;top:580px;" width="156.8" height="23.6"><text x="0.00" y="17.20" font-size="14.74" font-weight="normal" fill="#111" stroke="#111" stroke-width="0.50" textLength="127.33" lengthAdjust="spacing">14:00 - 20:00 | PM</text></svg>
<div class="r" style="left:1601.25px;top:613.55px;width:35.50px;height:35.50px;background:#ece9f3;border-radius:50%"></div>
<svg style="left:1608.4px;top:620.3px" width="24" height="24"><circle cx="9.6" cy="9.6" r="8" fill="none" stroke="#2e1a6e" stroke-width="2"/><path d="M15.4 15.2l5 5" stroke="#2e1a6e" stroke-width="2.2" stroke-linecap="round"/></svg>
<svg class="s" style="left:1652px;top:619px;" width="170.5" height="23.0"><text x="0.60" y="16.80" font-size="14.39" font-weight="normal" fill="#1a1a1a" stroke="#1a1a1a" stroke-width="0.25" textLength="141.71" lengthAdjust="spacing">DRIVER+LABOURER</text></svg>
<div class="r" style="left:245.80px;top:667.00px;width:652.00px;height:80.00px;background:#fff;border-radius:6px;box-shadow:0 1px 2px rgba(0,0,0,0.05)"></div>
<div class="r" style="left:251.30px;top:673.30px;width:22.20px;height:22.20px;border:1.6px solid #3d2a7a;border-radius:4px;background:#fff"></div>
<svg class="s" style="left:285px;top:672px;" width="157.6" height="23.7"><text x="0.80" y="17.40" font-size="14.80" font-weight="normal" fill="#111" stroke="#111" stroke-width="0.50" textLength="128.04" lengthAdjust="spacing">23:00 - 05:00 | NS</text></svg>
<div class="r" style="left:251.05px;top:705.75px;width:35.50px;height:35.50px;background:#ece9f3;border-radius:50%"></div>
<svg style="left:258.2px;top:712.5px" width="24" height="24"><circle cx="9.6" cy="9.6" r="8" fill="none" stroke="#2e1a6e" stroke-width="2"/><path d="M15.4 15.2l5 5" stroke="#2e1a6e" stroke-width="2.2" stroke-linecap="round"/></svg>
<svg class="s" style="left:302px;top:711px;" width="170.5" height="23.0"><text x="0.40" y="17.00" font-size="14.39" font-weight="normal" fill="#1a1a1a" stroke="#1a1a1a" stroke-width="0.25" textLength="141.71" lengthAdjust="spacing">DRIVER+LABOURER</text></svg>
<div class="r" style="left:765.00px;top:672.80px;width:127.80px;height:22.60px;background:#2ec712;border-radius:4px"></div>
<svg class="s" style="left:773px;top:671px;" width="143.1" height="23.3"><text x="0.00" y="17.20" font-size="14.53" font-weight="normal" fill="#6b5e6b" stroke="#6b5e6b" stroke-width="0.50" textLength="114.02" lengthAdjust="spacing">SHIFT RELEASE</text></svg>
<div class="r" style="left:819.20px;top:719.30px;width:43.60px;height:22.30px;background:#e6e4f5;border-radius:4px;box-shadow:0 1px 2px rgba(0,0,0,0.08)"></div>
<svg class="s" style="left:823px;top:717px;" width="66.7" height="23.7"><text x="0.20" y="17.50" font-size="14.83" font-weight="normal" fill="#3b2472" stroke="#3b2472" stroke-width="0.50" textLength="37.04" lengthAdjust="spacing">13:43</text></svg>
<svg class="s" style="left:875px;top:717px;" width="51.0" height="27.2"><text x="0.00" y="19.60" font-size="17.00" font-weight="normal" fill="#222">$</text></svg>
<div class="r" style="left:921.00px;top:667.00px;width:652.00px;height:80.00px;background:#fff;border-radius:6px;box-shadow:0 1px 2px rgba(0,0,0,0.05)"></div>
<div class="r" style="left:926.50px;top:673.30px;width:22.20px;height:22.20px;border:1.6px solid #3d2a7a;border-radius:4px;background:#fff"></div>
<svg class="s" style="left:961px;top:672px;" width="157.6" height="23.7"><text x="0.00" y="17.40" font-size="14.80" font-weight="normal" fill="#111" stroke="#111" stroke-width="0.50" textLength="128.04" lengthAdjust="spacing">23:00 - 05:00 | NS</text></svg>
<div class="r" style="left:926.25px;top:705.75px;width:35.50px;height:35.50px;background:#ece9f3;border-radius:50%"></div>
<svg style="left:933.4px;top:712.5px" width="24" height="24"><circle cx="9.6" cy="9.6" r="8" fill="none" stroke="#2e1a6e" stroke-width="2"/><path d="M15.4 15.2l5 5" stroke="#2e1a6e" stroke-width="2.2" stroke-linecap="round"/></svg>
<svg class="s" style="left:977px;top:711px;" width="170.5" height="23.0"><text x="0.60" y="17.00" font-size="14.39" font-weight="normal" fill="#1a1a1a" stroke="#1a1a1a" stroke-width="0.25" textLength="141.71" lengthAdjust="spacing">DRIVER+LABOURER</text></svg>
<div class="r" style="left:1440.20px;top:672.80px;width:127.80px;height:22.60px;background:#2ec712;border-radius:4px"></div>
<svg class="s" style="left:1448px;top:671px;" width="143.1" height="23.3"><text x="0.20" y="17.20" font-size="14.53" font-weight="normal" fill="#6b5e6b" stroke="#6b5e6b" stroke-width="0.50" textLength="114.02" lengthAdjust="spacing">SHIFT RELEASE</text></svg>
<div class="r" style="left:1494.40px;top:719.30px;width:43.60px;height:22.30px;background:#e6e4f5;border-radius:4px;box-shadow:0 1px 2px rgba(0,0,0,0.08)"></div>
<svg class="s" style="left:1498px;top:717px;" width="66.7" height="23.7"><text x="0.40" y="17.50" font-size="14.83" font-weight="normal" fill="#3b2472" stroke="#3b2472" stroke-width="0.50" textLength="37.04" lengthAdjust="spacing">14:43</text></svg>
<svg class="s" style="left:1550px;top:717px;" width="51.0" height="27.2"><text x="0.20" y="19.60" font-size="17.00" font-weight="normal" fill="#222">$</text></svg>
<div class="r" style="left:1596.00px;top:667.00px;width:652.00px;height:80.00px;background:#fff;border-radius:6px;box-shadow:0 1px 2px rgba(0,0,0,0.05)"></div>
<div class="r" style="left:1601.50px;top:673.30px;width:22.20px;height:22.20px;border:1.6px solid #3d2a7a;border-radius:4px;background:#fff"></div>
<svg class="s" style="left:1636px;top:672px;" width="157.6" height="23.7"><text x="0.00" y="17.40" font-size="14.80" font-weight="normal" fill="#111" stroke="#111" stroke-width="0.50" textLength="128.04" lengthAdjust="spacing">23:00 - 05:00 | NS</text></svg>
<div class="r" style="left:1601.25px;top:705.75px;width:35.50px;height:35.50px;background:#ece9f3;border-radius:50%"></div>
<svg style="left:1608.4px;top:712.5px" width="24" height="24"><circle cx="9.6" cy="9.6" r="8" fill="none" stroke="#2e1a6e" stroke-width="2"/><path d="M15.4 15.2l5 5" stroke="#2e1a6e" stroke-width="2.2" stroke-linecap="round"/></svg>
<svg class="s" style="left:1652px;top:711px;" width="170.5" height="23.0"><text x="0.60" y="17.00" font-size="14.39" font-weight="normal" fill="#1a1a1a" stroke="#1a1a1a" stroke-width="0.25" textLength="141.71" lengthAdjust="spacing">DRIVER+LABOURER</text></svg>
</div>
<div class="r" style="left:1778.00px;top:382.60px;width:18.00px;height:375.00px;background:#fafafc"></div>
<svg style="left:1781px;top:386px" width="11" height="8"><path d="M1 7L5.5 1.5 10 7z" fill="#8a8a8a"/></svg>
<div class="r" style="left:1781.50px;top:461.00px;width:10.00px;height:29.00px;background:#8a8a8a;border-radius:5px"></div>
<svg style="left:1781px;top:742px" width="11" height="8"><path d="M1 1L5.5 6.5 10 1z" fill="#8a8a8a"/></svg>
<svg style="left:242px;top:762px" width="9" height="11"><path d="M7.5 1L1.5 5.5 7.5 10z" fill="#8a8a8a"/></svg>
<div class="r" style="left:258.80px;top:762.00px;width:110.00px;height:11.00px;background:#8a8a8a;border-radius:5.5px"></div>
<svg style="left:1761px;top:762px" width="9" height="11"><path d="M1.5 1L7.5 5.5 1.5 10z" fill="#8a8a8a"/></svg>
<div class="r" style="left:116.00px;top:588.00px;width:36.00px;height:36.00px;background:#ece9f3;border-radius:50%"></div>
<svg style="left:124px;top:596px" width="20" height="20" viewBox="0 0 20 20"><g fill="none" stroke="#3b2472" stroke-width="1.3"><path d="M1.5 19V1.8h8.2V19M9.7 8.2h8V19M0.5 19h18.5"/><path d="M3.6 4.6h3.6M3.6 7.4h3.6M3.6 10.2h3.6" stroke-width="1.1"/></g></svg>
<svg class="s" style="left:39px;top:620px;" width="212.9" height="21.9"><text x="0.60" y="16.60" font-size="13.66" font-weight="normal" fill="#111" stroke="#111" stroke-width="0.50" textLength="185.56" lengthAdjust="spacing">123 CABS MAYFIELD WEST</text></svg>
<svg class="s" style="left:117px;top:637px;" width="61.7" height="21.6"><text x="0.20" y="15.70" font-size="13.52" font-weight="normal" fill="#111" stroke="#111" stroke-width="0.50" textLength="34.65" lengthAdjust="spacing">TEST</text></svg>
<svg style="left:1838.6px;top:112.5px" width="10" height="8"><path d="M0.6 7.4L4.9 0.6 9.3 7.4z" fill="#8a8a8a"/></svg>
<div class="r" style="left:1838.20px;top:128.00px;width:10.70px;height:629.50px;background:#8a8a8a;border-radius:5.4px"></div>
<svg style="left:1838px;top:806px" width="11" height="8"><path d="M1 1L5.5 6.5 10 1z" fill="#8a8a8a"/></svg>
<div class="r" style="left:0.00px;top:825.80px;width:1853.00px;height:46.20px;background:#e8e6f4;border-bottom-right-radius:9px"></div>
<svg class="s" style="left:17px;top:835px;" width="113.5" height="26.0"><text x="0.50" y="19.60" font-size="16.26" font-weight="normal" fill="#555" textLength="80.94" lengthAdjust="spacing">App Users</text></svg>
<svg class="s" style="left:121px;top:836px;" width="120.5" height="25.9"><text x="0.00" y="18.60" font-size="16.17" font-weight="normal" fill="#555" textLength="88.13" lengthAdjust="spacing">Case Notes</text></svg>
<svg class="s" style="left:231px;top:835px;" width="130.2" height="26.2"><text x="0.30" y="19.60" font-size="16.41" font-weight="normal" fill="#555" textLength="97.35" lengthAdjust="spacing">Contact Log</text></svg>
<svg class="s" style="left:350px;top:835px;" width="164.0" height="26.2"><text x="0.40" y="19.60" font-size="16.35" font-weight="normal" fill="#555" textLength="131.34" lengthAdjust="spacing">Contact Member</text></svg>
<svg class="s" style="left:503px;top:835px;" width="149.3" height="26.1"><text x="0.80" y="19.60" font-size="16.32" font-weight="normal" fill="#555" textLength="116.64" lengthAdjust="spacing">Daily Bookings</text></svg>
<svg class="s" style="left:642px;top:835px;" width="189.5" height="26.1"><text x="0.60" y="19.60" font-size="16.34" font-weight="normal" fill="#555" textLength="156.84" lengthAdjust="spacing">Download Bookings</text></svg>
<svg class="s" style="left:820px;top:835px;" width="109.7" height="26.2"><text x="0.80" y="19.60" font-size="16.39" font-weight="normal" fill="#555" textLength="76.95" lengthAdjust="spacing">Infections</text></svg>
<svg class="s" style="left:918px;top:835px;" width="138.1" height="26.0"><text x="0.30" y="19.60" font-size="16.25" font-weight="normal" fill="#555" textLength="105.64" lengthAdjust="spacing">Talent Search</text></svg>
<svg class="s" style="left:1045px;top:836px;" width="75.3" height="25.6"><text x="0.40" y="18.60" font-size="15.99" font-weight="normal" fill="#555" textLength="43.32" lengthAdjust="spacing">Users</text></svg>
<div class="r" style="left:106.00px;top:840.00px;width:1.00px;height:18.50px;background:#9a9a9a"></div>
<div class="r" style="left:217.00px;top:840.00px;width:1.00px;height:18.50px;background:#9a9a9a"></div>
<div class="r" style="left:337.00px;top:840.00px;width:1.00px;height:18.50px;background:#9a9a9a"></div>
<div class="r" style="left:489.00px;top:840.00px;width:1.00px;height:18.50px;background:#9a9a9a"></div>
<div class="r" style="left:628.00px;top:840.00px;width:1.00px;height:18.50px;background:#9a9a9a"></div>
<div class="r" style="left:811.00px;top:840.00px;width:1.00px;height:18.50px;background:#9a9a9a"></div>
<div class="r" style="left:909.00px;top:840.00px;width:1.00px;height:18.50px;background:#9a9a9a"></div>
<div class="r" style="left:1032.00px;top:840.00px;width:1.00px;height:18.50px;background:#9a9a9a"></div>
<div class="r" style="left:1096.00px;top:840.00px;width:1.00px;height:18.50px;background:#9a9a9a"></div>
<svg class="s" style="left:1108px;top:835px;" width="118.6" height="26.1"><text x="0.90" y="19.60" font-size="16.31" font-weight="normal" fill="#444" stroke="#444" stroke-width="0.50" textLength="85.94" lengthAdjust="spacing">More Links</text></svg>
<svg style="left:1201.5px;top:845.6px" width="13" height="8"><path d="M0.5 6.4L6 0.4 11.5 6.4z" fill="#444"/></svg>
<svg class="s" style="left:1589px;top:834px;" width="125.7" height="26.8"><text x="0.40" y="20.00" font-size="16.75" font-weight="normal" fill="#666" textLength="92.17" lengthAdjust="spacing">Powered by</text></svg>
<div class="r" style="left:1758.00px;top:837.00px;width:1.00px;height:22.60px;background:#888"></div>
<div class="r" style="left:1799.00px;top:837.00px;width:1.00px;height:22.60px;background:#888"></div>
<svg style="left:1769px;top:838px" width="20" height="20"><g fill="none" stroke="#2e1a6e" stroke-width="1.8"><circle cx="10" cy="10" r="8.6"/><circle cx="10" cy="8" r="2.8"/><path d="M4.4 16.6a6.4 6.4 0 0 1 11.2 0"/></g></svg>
<svg style="left:1811px;top:838px" width="21" height="20"><g fill="none" stroke="#2e1a6e" stroke-width="1.8" stroke-linecap="round"><path d="M17.6 6.2A8.6 8.6 0 1 1 14.8 2.6"/><path d="M6.2 9.6l3.4 3.4 9.4-10"/></g></svg>
<svg style="left:0;top:0" width="1" height="1">
<defs><linearGradient id="xg" gradientUnits="userSpaceOnUse" x1="1690.3" y1="859.3" x2="1705.4" y2="842.5"><stop offset="0" stop-color="#d91b1b"/><stop offset="0.55" stop-color="#ee6a1c"/><stop offset="1" stop-color="#fbb813"/></linearGradient>
<linearGradient id="xp" gradientUnits="userSpaceOnUse" x1="1691.6" y1="841.6" x2="1705.9" y2="859.3"><stop offset="0" stop-color="#d4208f"/><stop offset="0.45" stop-color="#b3198e"/><stop offset="0.55" stop-color="#6a36a0"/><stop offset="1" stop-color="#9a6ab8"/></linearGradient></defs>
<path d="M1692 842L1705.6 859" stroke="url(#xp)" stroke-width="6" stroke-linecap="round"/>
<path d="M1690.6 859L1705 842.8" stroke="url(#xg)" stroke-width="6" stroke-linecap="round"/>
<path d="M1699.4 851.6L1705.6 859" stroke="url(#xp)" stroke-width="6" stroke-linecap="butt"/><circle cx="1705.6" cy="859" r="3" fill="#9a6ab8"/>
<circle cx="1698.8" cy="838.6" r="3.1" fill="#f28a1e"/>
<text x="1706.3" y="854.6" font-family="Liberation Sans" font-size="17" fill="#2a2a2a" textLength="38" lengthAdjust="spacingAndGlyphs">eople</text>
<circle cx="1745.6" cy="845.2" r="1.1" fill="none" stroke="#888" stroke-width="0.5"/>
</svg>
<div class="r" style="left:1317.00px;top:251.00px;width:101.00px;height:80.00px;background:#fff;border-radius:6px;box-shadow:0 1px 4px rgba(0,0,0,0.15)"></div>
<svg style="left:1359px;top:246px" width="15" height="7"><path d="M0 6.5L7.5 0L15 6.5z" fill="#fff"/></svg>
<svg class="s" style="left:1330px;top:257px;" width="97.9" height="19.3"><text x="0.90" y="14.80" font-size="12.06" font-weight="bold" fill="#111" textLength="73.74" lengthAdjust="spacing">COMPLETED</text></svg>
<svg class="s" style="left:1330px;top:278px;" width="92.5" height="17.1"><text x="0.90" y="12.70" font-size="10.71" font-weight="normal" fill="#333" textLength="71.05" lengthAdjust="spacing">47 / 555 Shifts</text></svg>
<div class="r" style="left:1358.20px;top:299.00px;width:45.60px;height:22.80px;background:#fde3e3;border-radius:3px"></div>
<svg class="s" style="left:1365px;top:298px;" width="61.8" height="23.6"><text x="0.60" y="17.10" font-size="14.77" font-weight="normal" fill="#e8474a" stroke="#e8474a" stroke-width="0.50" textLength="32.23" lengthAdjust="spacing">Hide</text></svg>
</body></html>
